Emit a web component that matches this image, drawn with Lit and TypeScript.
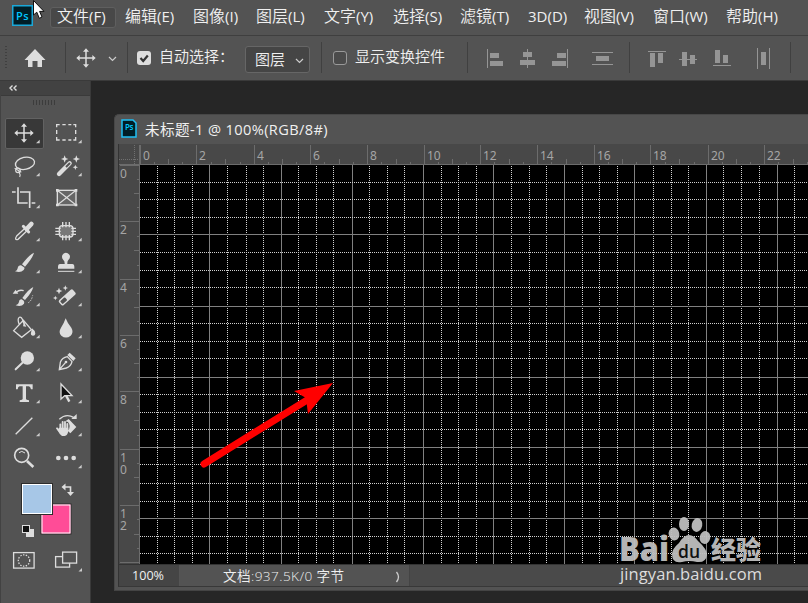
import { LitElement, html, css, svg, nothing } from "lit";
import { customElement } from "lit/decorators.js";

const MENU: [string, number][] = [
  ["文件(F)", 68], ["编辑(E)", 68], ["图像(I)", 63], ["图层(L)", 68], ["文字(Y)", 69], ["选择(S)", 67],
  ["滤镜(T)", 68], ["3D(D)", 56], ["视图(V)", 69], ["窗口(W)", 73], ["帮助(H)", 60],
];

const star = (x: number, y: number, r: number) =>
  svg`<path fill="#ddd" stroke="none" d="M${x} ${y - r}L${x + r * 0.28} ${y - r * 0.28}L${x + r} ${y}L${x + r * 0.28} ${y + r * 0.28}L${x} ${y + r}L${x - r * 0.28} ${y + r * 0.28}L${x - r} ${y}L${x - r * 0.28} ${y - r * 0.28}Z"/>`;

const MOVE = svg`<path stroke-width="4.5" d="M0-23V23M-23 0H23"/><path fill="#ddd" stroke="none" d="M0-29L9-19H-9ZM0 29L9 19H-9ZM-29 0L-19-9V9ZM29 0L19-9V9Z"/>`;

// Icons use a 96-unit box around the centre; one pixel is three units.
const TOOLS = [
  MOVE,
  svg`<path stroke-width="4" d="M-28-17V-25H-19M-11-25H-1M7-25H16M22-25H29V-17M29-9V3M29 12V21H22M16 21H7M-1 21H-11M-19 21H-28V12M-28 3V-9"/>`,
  svg`<ellipse cx="3" cy="-8" rx="29" ry="18" transform="rotate(-12 3 -8)"/><circle cx="-18" cy="13" r="7" stroke-width="3.5"/><path stroke-width="3.5" d="M-28 7L-8 19M-16 16C-12 23-9 26-13 33"/>`,
  svg`<path stroke-width="13" stroke-linecap="round" d="M-21 24L11-8"/><path stroke="#535353" stroke-width="6" d="M0 3L12-9"/>${star(-4, -21, 11)}${star(31, -21, 11)}${star(28, 4, 8)}`,
  svg`<path stroke-width="5" d="M-36-18H-25M-12-18H17V30M-18-32V15H11M23 15H34"/>`,
  svg`<rect x="-26" y="-23" width="56" height="44" stroke-width="4" fill="#666"/><path stroke-width="3.5" d="M-26-23L30 21M30-23L-26 21"/><path stroke="none" fill="#ddd" d="M-30-27h8v8h-8zM26-27h8v8h-8zM-30 17h8v8h-8zM26 17h8v8h-8z"/>`,
  svg`<path stroke-width="4" d="M3-8L-22 15Q-30 28-18 25L9-1"/><path stroke-width="9" stroke-linecap="round" d="M-2-14L14 3"/><path stroke-width="14" stroke-linecap="round" d="M8-6L22-21"/>`,
  svg`<rect x="-20" y="-16" width="41" height="34" rx="9" fill="#777" stroke-width="4"/><path stroke-width="4" d="M-10-27V-11M0-27V-11M10-27V-11M-10 12V28M0 12V28M10 12V28M-32-8H-16M-32 1H-16M-32 10H-16M16-8H30M16 1H30M16 10H30"/>`,
  svg`<path fill="#ddd" stroke="none" d="M30-31Q15-24-6 4L3 11Q26-15 30-31ZM-9 7Q-18 7-19 16Q-20 23-27 25Q-10 31-1 21Q4 15-1 12Z"/>`,
  svg`<path fill="#ddd" stroke="none" d="M-12-18A12 12 0 1 1 7-9Q4-6 4 1V3H19Q25 3 25 12V17H-24V12Q-24 3-18 3H-4V1Q-4-6-8-9Q-12-13-12-18Z"/><path stroke-width="3" d="M-24 25H25"/>`,
  svg`<path fill="#ddd" stroke="none" d="M28-27Q14-21-5 6L3 12Q24-11 28-27ZM-7 10Q-15 10-15 18Q-17 27-25 28Q-8 34 0 23Q2 17-1 14ZM-34-7L-25-19L-17-7Z"/><path stroke-width="4" d="M-23-11Q-14-20-1-16"/><path stroke-width="3" stroke-dasharray="4 4" d="M13 20Q23 14 26-2"/>`,
  svg`<g transform="translate(3 5) rotate(-42)"><rect x="-27" y="-10" width="56" height="20" rx="5" fill="#ddd" stroke="none"/><rect x="-23" y="-6" width="19" height="12" rx="3" fill="#535353" stroke="none"/></g>${star(-21, -15, 10)}${star(-2, -24, 8)}${star(-32, 6, 7)}`,
  svg`<path stroke-width="4" d="M-31 8L-2-23L22 5L-7 28ZM-14-10C-24-35-7-41-3-20L2-9"/><path fill="#ddd" stroke="none" d="M0-17L7-4L-3-5ZM24 1Q34 8 34 17Q33 24 26 23Q19 21 21 14Z"/>`,
  svg`<path fill="#ddd" stroke="none" d="M-1-29Q5-13 16-1Q24 13 14 23Q0 34-14 23Q-24 13-15-1Q-7-12-1-29Z"/>`,
  svg`<circle cx="10" cy="-9" r="20" fill="#ddd" stroke="none"/><path stroke-width="6" stroke-linecap="round" d="M-3 4L-25 25"/>`,
  svg`<path stroke-width="4" d="M-20 26L-17 4Q-12-10 4-13L18 2Q15 16 1 21ZM-20 26L-1 4"/><circle cx="0" cy="3" r="4" fill="#ddd" stroke="none"/><path fill="#ddd" stroke="none" d="M4-18L11-25L29-8L22 0Z"/>`,
  svg`<path fill="#ddd" stroke="none" d="M-24-26H26V-11H21Q19-20 14-20H6V18Q6 21 15 22V27H-13V22Q-4 21-4 18V-20H-13Q-18-20-19-11H-24Z"/>`,
  svg`<path stroke-width="4" fill="#111" d="M-15-27V18L-4 8L18 8Z"/><path stroke-width="7" d="M0 7L10 26"/>`,
  svg`<path stroke-width="4" d="M-25 25L25-25"/>`,
  svg`<path fill="#ddd" stroke="none" d="M8-21L31 3L13 22L5 14Q17 2 6-12L-2-14Z"/><path fill="#ddd" stroke="none" d="M16-21H32V-36Z"/><path stroke-width="4" d="M-20-20Q0-39 24-25"/><path stroke="#ddd" stroke-width="5.5" stroke-linecap="round" d="M-17 10V-5M-10 8V-12M-3 8V-12M4 10V-6M-27 7L-16 19"/><path fill="#ddd" stroke="none" d="M-20 5H7V14Q5 28-4 30H-12Q-19 26-26 12Z"/>`,
  svg`<circle cx="-7" cy="-8" r="21" stroke-width="5"/><path stroke-width="8" d="M9 9L28 27"/><path stroke-width="3" d="M-15-16Q-7-24 3-15"/>`,
  svg`<g fill="#ddd" stroke="none"><circle cx="-23" r="7"/><circle r="7"/><circle cx="23" r="7"/></g>`,
];
const NO_CORNER = new Set([5, 20]);

@customElement("ps-icon")
class PsIcon extends LitElement {
  static properties = { index: { type: Number } };
  declare index: number;
  static styles = css`
    :host { display: block; width: 32px; height: 32px; }
    svg { display: block; overflow: visible; }
  `;
  render() {
    return html`<svg width="32" height="32" viewBox="-48 -48 96 96" fill="none" stroke="#ddd" stroke-width="4">
      ${TOOLS[this.index]}
      ${NO_CORNER.has(this.index) ? nothing : svg`<path d="M47 20V31H36Z" fill="#ccc" stroke="none"/>`}
    </svg>`;
  }
}

const GX = [157, 174, 192, 209, 227, 246, 263, 281, 298, 316, 333, 352, 369, 387, 404, 423, 441, 458, 476, 493, 511, 529, 546, 564, 582, 599, 617, 634, 653, 671, 688, 706, 723, 741, 759, 777, 794];
const GY = [182, 199, 217, 234, 252, 270, 287, 306, 323, 341, 358, 377, 394, 412, 429, 447, 464, 483, 501, 518, 536, 553];
const RX = [140, 196, 254, 310, 367, 424, 480, 537, 594, 650, 708, 764];
const RY = [165, 221, 279, 335, 391, 449, 505, 562];

@customElement("app-root")
class AppRoot extends LitElement {
  static styles = css`
    :host { display: flex; flex-direction: column; width: 808px; height: 603px; overflow: hidden; position: relative;
      background: #262626; color: #f0f0f0; font-family: "Open Sans", "Noto Sans CJK SC", sans-serif; }
    * { box-sizing: border-box; }
    svg { display: block; flex: none; }
    .menu { height: 35px; flex: none; background: #535353; display: flex; align-items: flex-start; }
    .logo { margin: 5px 0 0 12px; }
    .items { display: flex; margin: 7px 0 0 17px; }
    .item { flex: none; height: 21px; line-height: 18px; font-size: 15px; white-space: nowrap; padding-left: 7px; }
    .item b { font-weight: 350; font-size: 16px; }
    .item.on { background: #484848; box-shadow: 0 0 0 1px #5f5f5f inset; border-radius: 3px; width: 66px !important; margin-right: 2px; }
    .cursor { position: absolute; left: 32px; top: 0; }
    .options { height: 46px; flex: none; background: #535353; border-top: 1px solid #3f3f3f; border-bottom: 1px solid #3a3a3a;
      display: flex; align-items: center; font-size: 15px; font-weight: 350; white-space: nowrap; padding-bottom: 1px; }
    .sep { width: 1px; height: 31px; background: #404040; flex: none; }
    .grip { width: 3px; height: 24px; margin-left: 5px; background: repeating-linear-gradient(#404040 0 1px, transparent 1px 3px); }
    .check { width: 14px; height: 14px; border-radius: 3px; background: #ddd; margin-left: 9px; flex: none; }
    .check.off { background: #4b4b4b; border: 1px solid #999; margin-left: 11px; }
    .opt { margin-left: 8px; height: 25px; line-height: 22px; flex: none; }
    .select { width: 65px; flex: none; height: 27px; border: 1px solid #666; border-radius: 3px; background: #454545; display: flex; align-items: center;
      padding-left: 9px; line-height: 22px; margin-top: 3px; font-size: 15px; }
    .select svg { margin: 3px 0 0 10px; }
    .body { flex: 1; display: flex; min-height: 0; }
    .tools { width: 91px; flex: none; background: #535353; border-left: 1px solid #424242; border-right: 1px solid #3a3a3a; }
    .head { height: 15px; background: #424242; border-bottom: 1px solid #3a3a3a; padding: 4px 0 0 8px; }
    .dots { width: 24px; height: 5px; margin: 4px 0 0 32px; background: repeating-linear-gradient(90deg, #3c3c3c 0 1px, transparent 1px 3px); }
    .grid { display: grid; grid-template-columns: 42px 42px; grid-auto-rows: 32.5px; margin: 12px 0 0 2px; }
    .cell { display: grid; place-items: center; position: relative; }
    .cell.on::before { content: ""; position: absolute; inset: .5px 1.5px 1px 1.5px; background: #383838; border: 1px solid #626262; border-radius: 2px; }
    .cell ps-icon { position: relative; }
    .work { flex: 1; padding: 33px 0 0 23px; min-width: 0; background: #262626; }
    .doc { height: 477px; width: 696px; background: #535353; border-top: 1px solid #474747; border-left: 1px solid #474747; border-bottom: 1px solid #444; border-radius: 5px 0 0 0; }
    .title { height: 29px; display: flex; align-items: center; padding: 0 0 2px 6px; font-size: 14.6px; white-space: pre; }
    .title span { margin-left: 8px; letter-spacing: .38px; }
    .status { display: flex; height: 22px; margin-left: 3px; background: #4a4a4a; border-left: 1px solid #333; border-bottom: 1px solid #383838; font-size: 12px; line-height: 22px; white-space: nowrap; }
    .zoom { width: 61px; padding-left: 13px; border-right: 1px solid #555; background: #454545; font-size: 12.6px; line-height: 21px; }
    .info { width: 230px; background: #535353; padding-left: 43px; font-size: 13.6px; line-height: 21px; display: flex; border-right: 1px solid #444; }
    .info span { width: 172px; letter-spacing: .42px; font-weight: 350; }
    .info svg { margin: 6px 0 0 0; }
    .canvas { margin-left: 3px; }
    .ruler { font: 12px "Noto Sans", "Open Sans", sans-serif; fill: #a5a5a5; }
    .over { position: absolute; left: 0; top: 0; pointer-events: none; }
    .ps { font: 600 11px "Open Sans", sans-serif; fill: #00c8ff; }
    .mark { font: 800 33px "Open Sans", sans-serif; }
    .cjk { font: 900 25px "Noto Sans CJK SC", sans-serif; }
    .url { font: 400 16.5px "Open Sans", sans-serif; fill: #ddd; }
  `;

  private canvas() {
    const ticks = (a: number[], draw: (p: number, h: number) => unknown) =>
      a.flatMap((p, i) => {
        const n = a[i + 1] ?? p + 57;
        return [draw(p, 20), draw(p + Math.round((n - p) / 4), 3), draw(p + Math.round((n - p) / 2), 6), draw(p + Math.round(((n - p) * 3) / 4), 3)];
      });
    return html`<svg class="canvas" width="690" height="421" viewBox="118 144 690 421" shape-rendering="crispEdges">
      <rect x="118" y="144" width="690" height="421" fill="#484848"/>
      <rect x="140" y="165" width="668" height="399" fill="#000"/>
      <path d="M118 143.500H808M118.5 144V565" stroke="#333"/>
      <path d="M119 164.5H808M139.5 145V564" stroke="#6c6c6c"/>
      <path d="M134.5 145V164M119 159.5H139" stroke="#707070" stroke-dasharray="1 1"/>
      ${ticks(RX, (p, h) => svg`<path stroke="#6c6c6c" d="M${p + 0.5} 165V${165 - h}"/>`)}
      ${ticks(RY, (p, h) => p < 564 ? svg`<path stroke="#6c6c6c" d="M140 ${p + 0.5}H${140 - h}"/>` : nothing)}
      ${GX.map((x, i) => svg`<path d="M${x + 0.5} ${i % 4 === 3 ? 165 : 166}V564" stroke=${i % 4 === 3 ? "#808080" : "#d0d0d0"} stroke-dasharray=${i % 4 === 3 ? "none" : "1 1"}/>`)}
      ${GY.map((y, i) => svg`<path d="M140 ${y + 0.5}H808" stroke=${i % 4 === 3 ? "#808080" : "#d0d0d0"} stroke-dasharray=${i % 4 === 3 ? "none" : "1 1"}/>`)}
      <g class="ruler">
        ${RX.map((x, i) => svg`<text x=${x + 3} y="160">${i * 2}</text>`)}
        ${RY.slice(0, 7).map((y, i) => String(i * 2).split("").map((c, k) => svg`<text x="120" y=${y + 13 + k * 12}>${c}</text>`))}
      </g>
      <path d="M118 564.5H808" stroke="#333"/>
    </svg>`;
  }

  render() {
    const chev = (w: number) => html`<svg width=${w} height="8" viewBox="0 0 9 8"><path d="M1 2L4.5 5.5L8 2" fill="none" stroke="#ccc" stroke-width="1.2"/></svg>`;
    return html`
      <div class="menu">
        <svg class="logo" width="21" height="21"><rect x=".75" y=".75" width="19.5" height="19.5" fill="#001d26" stroke="#1ba8d8" stroke-width="1.5"/><text class="ps" x="4" y="14.5" textLength="12.5">Ps</text></svg>
        <div class="items">${MENU.map(([t, w], i) => {
          const k = t.indexOf("(");
          return k === 2 && t[0] === "3"
            ? html`<div class="item" style="width:${w}px">${t}</div>`
            : html`<div class="item ${i === 0 ? "on" : ""}" style="width:${w}px"><b>${t.slice(0, k)}</b>${t.slice(k)}</div>`;
        })}</div>
      </div>
      <div class="options">
        <div class="grip"></div>
        <svg width="22" height="20" viewBox="0 0 22 20" style="margin:1px 0 0 17px"><path fill="#ddd" d="M11 1L21.5 12H18V19H13.5V13H8.5V19H4V12H.5Z"/></svg>
        <div class="sep" style="margin-left:19px"></div>
        <svg width="20" height="20" viewBox="-30 -30 60 60" style="margin-left:10px" fill="none" stroke="#ddd">${MOVE}</svg>
        <div style="margin:3px 0 0 12px">${chev(9)}</div>
        <div class="sep" style="margin-left:10px"></div>
        <div class="check"><svg width="14" height="14"><path d="M3.5 7L6.2 10L10.8 4.5" fill="none" stroke="#333" stroke-width="2.2"/></svg></div>
        <div class="opt" style="width:79px">自动选择：</div>
        <div class="select" style="margin-left:7px">图层${chev(9)}</div>
        <div class="sep" style="margin-left:11px"></div>
        <div class="check off"></div>
        <div class="opt" style="width:94px">显示变换控件</div>
        <div class="sep" style="margin-left:18px"></div>
        <svg width="340" height="44" viewBox="468 37 340 44" fill="#959595" shape-rendering="crispEdges">
          <path d="M487 50h1v19h-1zM490 54h9v5h-9zM490 62h13v5h-13z"/>
          <path d="M527 50h1v19h-1zM523 53h9v5h-9zM520 61h15v5h-15z"/>
          <path d="M567 50h1v19h-1zM557 54h9v5h-9zM552 62h14v5h-14z"/>
          <path d="M592 53h21v1h-21zM596 57h13v5h-13zM592 65h21v1h-21z"/>
          <path d="M648 52h18v1h-18zM650 54h5v14h-5zM658 54h5v10h-5z"/>
          <path d="M679 60h18v1h-18zM682 53h5v14h-5zM690 56h5v9h-5z"/>
          <path d="M713 66h18v1h-18zM715 51h5v13h-5zM723 56h5v8h-5z"/>
          <path d="M757 49h1v21h-1zM761 53h5v13h-5zM769 49h1v21h-1z"/>
          <path fill="#404040" d="M629 43h1v31h-1zM790 43h1v31h-1z"/>
        </svg>
      </div>
      <div class="body">
        <div class="tools">
          <div class="head"><svg width="8" height="6"><path d="M3.5 .5L1 3L3.5 5.5M7.5 .5L5 3L7.5 5.5" fill="none" stroke="#ddd" stroke-width="1.4"/></svg></div>
          <div class="dots"></div>
          <div class="grid">${TOOLS.map((_, i) => html`<div class="cell ${i === 0 ? "on" : ""}"><ps-icon .index=${i}></ps-icon></div>`)}</div>
          <svg width="89" height="128" viewBox="1 475 89 128">
            <rect x="41" y="504" width="30" height="30" fill="#ff4c97" stroke="#2c2c2c"/><rect x="42" y="505" width="28" height="28" fill="none" stroke="#fff"/>
            <rect x="21.5" y="483.5" width="31" height="31" fill="#a7c7e7" stroke="#2c2c2c"/><rect x="22.5" y="484.5" width="29" height="29" fill="none" stroke="#fff"/>
            <path d="M64 487H70.5V493" fill="none" stroke="#ddd" stroke-width="1.6"/><path d="M61.5 487L65.5 483.5V490.5ZM67 492H74L70.5 496Z" fill="#ddd"/>
            <rect x="26" y="529" width="8" height="8" fill="#ddd"/><rect x="22.5" y="525.5" width="7" height="7" fill="#111" stroke="#ddd"/>
            <g fill="none" stroke="#ddd" stroke-width="1.3"><rect x="13.6" y="552.6" width="20.5" height="15.5"/><circle cx="24" cy="560.5" r="5.7" stroke-dasharray="1.4 1.4"/>
            <rect x="55.6" y="556.6" width="14" height="10.5"/><rect x="62.6" y="552.1" width="14" height="11" fill="#535353"/></g>
            <path d="M82 568V571.500H78.500Z" fill="#ccc"/>
          </svg>
        </div>
        <div class="work">
          <div class="doc">
            <div class="title"><svg width="16" height="19"><path d="M1 1H12L15 4V18H1Z" fill="#001d26" stroke="#1fc0f5" stroke-width="1.5"/><text class="ps" x="4" y="10.500" textLength="8.500" style="font-size:8px">Ps</text></svg><span>未标题-1 @ 100%(RGB/8#)</span></div>
            ${this.canvas()}
            <div class="status">
              <div class="zoom">100%</div>
              <div class="info"><span>文档:937.5K/0 字节</span><svg width="7" height="12"><path d="M1.500 1Q5.500 6 1.500 11" fill="none" stroke="#ccc" stroke-width="1.3"/></svg></div>
            </div>
          </div>
        </div>
      </div>
      <svg class="over" width="808" height="603">
        <path d="M204 464L312 397" stroke="#f00" stroke-width="7" stroke-linecap="round"/>
        <path d="M333 383L294 391L306 398L308 414Z" fill="#f00"/>
        <g fill="#c0c0c0" opacity=".94">
          <text class="mark" x="619" y="561" textLength="50" lengthAdjust="spacingAndGlyphs">Bai</text>
          <ellipse cx="674" cy="534" rx="5.300" ry="6.500" transform="rotate(-12 674 534)"/><ellipse cx="684" cy="524" rx="5" ry="7"/><ellipse cx="697" cy="525" rx="5.300" ry="7" transform="rotate(12 697 525)"/><ellipse cx="705" cy="537.500" rx="5.300" ry="6.500" transform="rotate(12 705 537.500)"/>
          <path d="M689 535Q694 535 698 541Q707 549 707 555Q706 563 697 562Q689 560 682 562Q672 564 672 554Q672 549 679 543Q684 535 689 535Z"/>
          <text class="cjk" x="711" y="559" textLength="50" lengthAdjust="spacingAndGlyphs">经验</text>
        </g>
        <text x="678" y="557.500" textLength="22" lengthAdjust="spacingAndGlyphs" class="mark" fill="#111" style="font-size:18px;font-weight:600">du</text>
        <text class="url" x="620" y="580" textLength="142">jingyan.baidu.com</text>
      </svg>
      <svg class="cursor" width="14" height="20"><path d="M1.500 .5V15L4.800 12.200L7.300 18.300L10 17L7.600 11.400H12Z" fill="#fff" stroke="#111"/></svg>
    `;
  }
}
